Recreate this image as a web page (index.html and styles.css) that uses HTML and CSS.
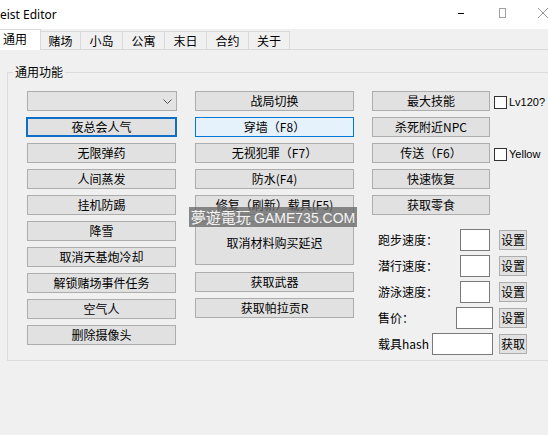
FILE: index.html
```html
<!DOCTYPE html>
<html lang="zh">
<head>
<meta charset="utf-8">
<title>Heist Editor</title>
<link rel="stylesheet" href="styles.css">
</head>
<body>
<div class="titlebar">
  <span class="title">eist Editor</span>
  <div class="controls">
    <span class="min"></span>
    <span class="max"></span>
    <span class="close">
      <svg width="10" height="10" viewBox="0 0 10 10"><path d="M0 0L10 10M10 0L0 10" stroke="#999" stroke-width="1"/></svg>
    </span>
  </div>
</div>
<div class="tabs">
  <div class="tab active">通用</div>
  <div class="tab w41">赌场</div>
  <div class="tab">小岛</div>
  <div class="tab">公寓</div>
  <div class="tab">末日</div>
  <div class="tab">合约</div>
  <div class="tab w42">关于</div>
</div>
<div class="panel">
  <fieldset class="group">
    <legend>通用功能</legend>
    <div class="cols">
      <div class="col col1">
        <div class="combo">
          <svg width="9" height="5" viewBox="0 0 9 5"><polyline points="0.5,0.5 4.5,4.5 8.5,0.5" fill="none" stroke="#555" stroke-width="1"/></svg>
        </div>
        <div class="btn focus">夜总会人气</div>
        <div class="btn">无限弹药</div>
        <div class="btn">人间蒸发</div>
        <div class="btn">挂机防踢</div>
        <div class="btn">降雪</div>
        <div class="btn">取消天基炮冷却</div>
        <div class="btn">解锁赌场事件任务</div>
        <div class="btn">空气人</div>
        <div class="btn">删除摄像头</div>
      </div>
      <div class="col col2">
        <div class="btn">战局切换</div>
        <div class="btn hover">穿墙（F8）</div>
        <div class="btn">无视犯罪（F7）</div>
        <div class="btn">防水(F4)</div>
        <div class="btn">修复（刷新）载具(F5)</div>
        <div class="btn tall">取消材料购买延迟</div>
        <div class="btn">获取武器</div>
        <div class="btn">获取帕拉贡R</div>
      </div>
      <div class="col3wrap">
        <div class="col3grid">
          <div class="btn">最大技能</div>
          <label class="check"><span class="box"></span><span class="cl">Lv120?</span></label>
          <div class="btn">杀死附近NPC</div>
          <div></div>
          <div class="btn">传送（F6）</div>
          <label class="check"><span class="box"></span><span class="cl">Yellow</span></label>
          <div class="btn">快速恢复</div>
          <div></div>
          <div class="btn">获取零食</div>
          <div></div>
        </div>
        <div class="form">
          <span class="lbl">跑步速度：</span><span class="tb w30"></span><div class="sbtn">设置</div>
          <span class="lbl">潜行速度：</span><span class="tb w30"></span><div class="sbtn">设置</div>
          <span class="lbl">游泳速度：</span><span class="tb w30"></span><div class="sbtn">设置</div>
          <span class="lbl">售价：</span><span class="tb w37"></span><div class="sbtn">设置</div>
          <span class="lbl">载具hash</span><span class="tb w61"></span><div class="sbtn">获取</div>
        </div>
      </div>
    </div>
  </fieldset>
</div>
<div class="watermark">夢遊電玩 <span class="wm-latin">GAME735.COM</span></div>
</body>
</html>
```
FILE: styles.css
```css
html, body {
  margin: 0;
  padding: 0;
}
body {
  width: 548px;
  height: 435px;
  overflow: hidden;
  background: #f0f0f0;
  font-family: "Noto Sans CJK SC", "Noto Sans", sans-serif;
  font-size: 12px;
  color: #000;
  position: relative;
}
.titlebar {
  height: 29px;
  background: #fff;
  display: flex;
  align-items: center;
}
.title {
  font-family: "Noto Sans", "Noto Sans CJK SC", sans-serif;
  font-size: 12px;
  margin-top: -1px;
}
.controls {
  margin-left: auto;
  width: 90px;
  display: flex;
  align-items: center;
  height: 29px;
}
.min {
  display: block;
  width: 10px;
  height: 1px;
  background: #000;
  margin-right: 35px;
  margin-top: -3px;
}
.max {
  display: block;
  width: 10px;
  height: 10px;
  box-sizing: border-box;
  border: 1px solid #a0a0a0;
  margin-right: 32px;
  margin-top: -3px;
}
.close {
  display: block;
  width: 10px;
  height: 10px;
  margin-top: -3px;
}
.close svg { display: block; }
.tabs {
  height: 21px;
  display: flex;
  align-items: flex-end;
  border-bottom: 1px solid #d9d9d9;
  box-sizing: border-box;
  position: relative;
}
.tab {
  width: 43px;
  height: 18px;
  box-sizing: border-box;
  border: 1px solid #d9d9d9;
  border-bottom: none;
  margin-left: -1px;
  background: #f0f0f0;
  text-align: center;
  line-height: 18px;
}
.tab.w41 { width: 41px; }
.tab.w42 { width: 42px; }
.tab.active {
  width: 41px;
  height: 21px;
  margin-left: 0;
  margin-bottom: -1px;
  border-left: none;
  background: #fff;
  text-align: left;
  padding-left: 3px;
  line-height: 18px;
  position: relative;
  z-index: 1;
}
.panel {
  height: 385px;
  overflow: hidden;
}
.group {
  margin: 14px 0 0 7px;
  padding: 0;
  border: 1px solid #dcdcdc;
  width: 600px;
  height: 297px;
  box-sizing: border-box;
  min-width: 0;
}
.group legend {
  font-size: 12px;
  line-height: 16px;
  padding: 0 2px;
  margin-left: 5px;
}
.cols {
  display: flex;
  align-items: flex-start;
  margin: 11px 0 0 19px;
}
.col {
  display: flex;
  flex-direction: column;
  gap: 6px;
}
.col1 { width: 149px; }
.col2 { width: 159px; margin-left: 19px; }
.col3wrap { margin-left: 18px; }
.btn {
  height: 20px;
  box-sizing: border-box;
  border: 1px solid #adadad;
  background: #e1e1e1;
  text-align: center;
  line-height: 18px;
  white-space: nowrap;
}
.btn.focus {
  border: 2px solid #0f6fc6;
  line-height: 16px;
  margin: 0 -1px;
}
.btn.hover {
  background: #e5f1fb;
  border-color: #0078d7;
}
.btn.tall {
  height: 44px;
  line-height: 42px;
  margin-bottom: 1px;
}
.combo {
  height: 20px;
  box-sizing: border-box;
  border: 1px solid #adadad;
  background: #e3e3e3;
  display: flex;
  justify-content: flex-end;
  align-items: center;
  padding-right: 4px;
  margin-right: -1px;
}
.combo svg { display: block; }
.col3grid {
  display: grid;
  grid-template-columns: 118px auto;
  grid-auto-rows: 20px;
  column-gap: 4px;
  row-gap: 6px;
}
.check {
  display: flex;
  align-items: center;
}
.box {
  display: block;
  width: 13px;
  height: 13px;
  box-sizing: border-box;
  border: 1px solid #333;
  background: #fff;
  margin-top: 2px;
}
.cl {
  font-family: "Liberation Sans", "DejaVu Sans", sans-serif;
  font-size: 11px;
  margin-left: 2px;
  margin-top: 1px;
}
.form {
  margin: 13px 0 0 6px;
  width: 149px;
  display: grid;
  grid-template-columns: minmax(0, 1fr) 61px 28px;
  column-gap: 6px;
  row-gap: 3px;
  grid-auto-rows: 23px;
  align-items: center;
}
.lbl {
  white-space: nowrap;
  overflow: visible;
}
.tb {
  display: block;
  height: 22px;
  box-sizing: border-box;
  border: 1px solid #7a7a7a;
  background: #fff;
  justify-self: end;
}
.tb.w30 { width: 30px; margin-right: 3px; }
.tb.w37 { width: 37px; }
.tb.w61 { width: 61px; }
.sbtn {
  height: 20px;
  box-sizing: border-box;
  border: 1px solid #adadad;
  background: #e1e1e1;
  text-align: center;
  line-height: 18px;
  white-space: nowrap;
}
.watermark {
  position: absolute;
  left: 189px;
  top: 207px;
  width: 168px;
  height: 20px;
  background: rgba(105, 105, 105, 0.78);
  color: #f4f4f4;
  font-family: "Noto Sans CJK TC", "Noto Sans", sans-serif;
  font-size: 15px;
  line-height: 20px;
  text-align: center;
  white-space: nowrap;
}
.wm-latin {
  font-family: "Liberation Sans", "Noto Sans", sans-serif;
  font-size: 14px;
}
```
